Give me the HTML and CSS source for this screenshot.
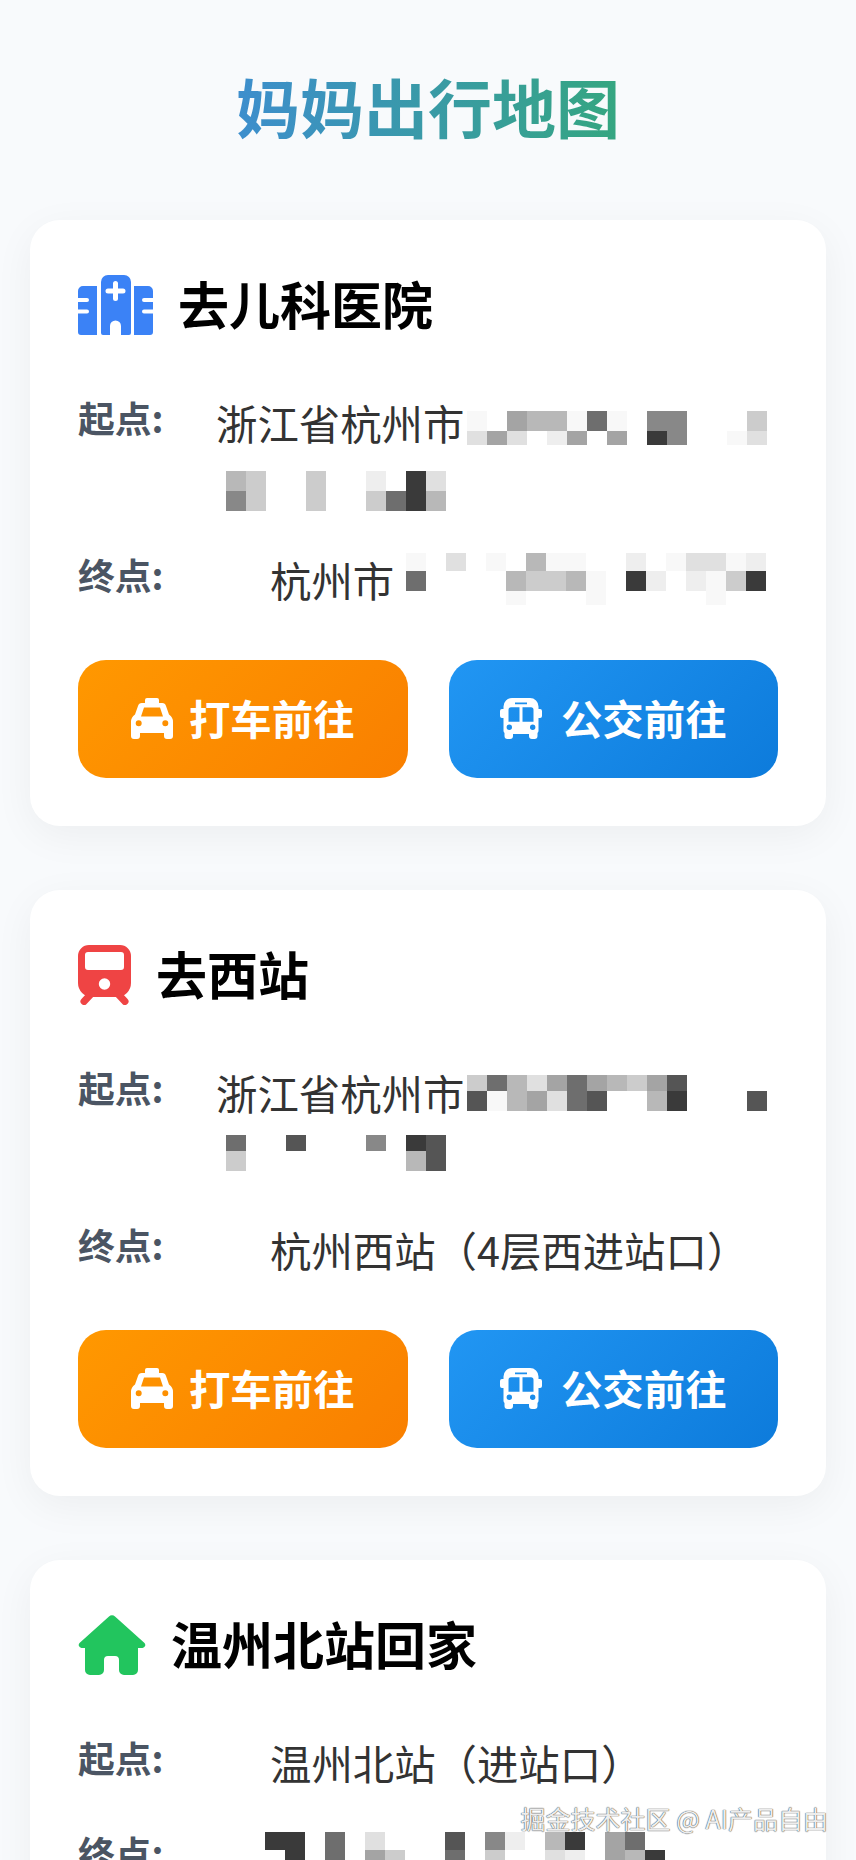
FILE: index.html
```html
<!DOCTYPE html>
<html lang="zh-CN">
<head>
    <meta charset="UTF-8">
    <meta name="viewport" content="width=device-width, initial-scale=1.0">
    <title>妈妈出行地图</title>
    <link rel="stylesheet" href="styles.css">
</head>
<body>
    <svg xmlns="http://www.w3.org/2000/svg" class="defs">
        <symbol id="icon-hospital" viewBox="0 0 75 60">
            <path fill-rule="evenodd" d="M30 0H46a7 7 0 0 1 7 7V58a2 2 0 0 1-2 2H43V51a5 5 0 0 0-11 0V60H25a2 2 0 0 1-2-2V7a7 7 0 0 1 7-7ZM35 8.500V13.500H30a2.500 2.500 0 0 0 0 5H35V23.500a2.500 2.500 0 0 0 5 0V18.500H45a2.500 2.500 0 0 0 0-5H40V8.500a2.500 2.500 0 0 0-5 0Z"/>
            <path d="M5 11H19V60H3a3 3 0 0 1-3-3V38.500H9a2 2 0 0 0 0-4H0V27H9a2 2 0 0 0 0-4H0V16a5 5 0 0 1 5-5Z"/>
            <path d="M56 11H70a5 5 0 0 1 5 5V23H66a2 2 0 0 0 0 4H75V34.500H66a2 2 0 0 0 0 4H75V57a3 3 0 0 1-3 3H56Z"/>
        </symbol>
        <symbol id="icon-train" viewBox="0 0 53 60">
            <path fill-rule="evenodd" d="M11 0H42A11 11 0 0 1 53 11V38A14 14 0 0 1 39 52H14A14 14 0 0 1 0 38V11A11 11 0 0 1 11 0ZM10 7A3 3 0 0 0 7 10V22A3 3 0 0 0 10 25H43A3 3 0 0 0 46 22V10A3 3 0 0 0 43 7ZM26.500 33.300A5.700 5.700 0 1 0 26.500 44.700A5.700 5.700 0 1 0 26.500 33.300Z"/>
            <path d="M13 49L6 56.500" stroke-width="7" stroke-linecap="round"/>
            <path d="M40 49L47 56.500" stroke-width="7" stroke-linecap="round"/>
        </symbol>
        <symbol id="icon-home" viewBox="0 0 68 60">
            <path d="M31 1.500a4 4 0 0 1 6 0L66.500 28a3 3 0 0 1-2 5H60V55a5 5 0 0 1-5 5H46a5 5 0 0 1-5-5V45a4 4 0 0 0-4-4H30a4 4 0 0 0-4 4V55a5 5 0 0 1-5 5H12a5 5 0 0 1-5-5V33H3.500a3 3 0 0 1-2-5Z"/>
        </symbol>
        <symbol id="icon-taxi" viewBox="0 0 42 41">
            <path fill-rule="evenodd" d="M16 0H26a2 2 0 0 1 2 2V5H31a4 4 0 0 1 4 3L38 16.500Q42 19 42 24V38a3 3 0 0 1-3 3H36a3 3 0 0 1-3-3V35H9V38a3 3 0 0 1-3 3H3a3 3 0 0 1-3-3V24Q0 19 4 16.500L7 8a4 4 0 0 1 4-3H14V2a2 2 0 0 1 2-2ZM13 9.500L10 18.500H32L29 9.500ZM7.700 22.300a3 3 0 1 0 0 6a3 3 0 1 0 0-6ZM34.300 22.300a3 3 0 1 0 0 6a3 3 0 1 0 0-6Z"/>
        </symbol>
        <symbol id="icon-bus" viewBox="0 0 42 41">
            <path fill-rule="evenodd" d="M12 0H30a8.500 8.500 0 0 1 8.500 8.500V11H40a2 2 0 0 1 2 2V18a2 2 0 0 1-2 2H38.500V33a3 3 0 0 1-1 2V38a3 3 0 0 1-3 3H32a3 3 0 0 1-3-3V36H13V38a3 3 0 0 1-3 3H7.500a3 3 0 0 1-3-3V35a3 3 0 0 1-1-2V20H2a2 2 0 0 1-2-2V13a2 2 0 0 1 2-2H3.500V8.500A8.500 8.500 0 0 1 12 0ZM15 4.500V6.300H27V4.500ZM11 9.300a2.500 2.500 0 0 0-2.500 2.500V23.700H19.500V9.300ZM22.500 9.300V23.700H33.500V11.800a2.500 2.500 0 0 0-2.500-2.500ZM9.300 26.600a2.700 2.700 0 1 0 0 5.400a2.700 2.700 0 1 0 0-5.400ZM32.700 26.600a2.700 2.700 0 1 0 0 5.400a2.700 2.700 0 1 0 0-5.400Z"/>
        </symbol>
    </svg>

    <h1 class="page-title"><span>妈妈出行地图</span></h1>

    <div class="card">
        <div class="card-head">
            <svg class="head-icon hospital"><use href="#icon-hospital"/></svg>
            <h2>去儿科医院</h2>
        </div>
        <div class="row">
            <div class="label">起点:</div>
            <div class="value">
                <div class="line">
                    <span>浙江省杭州市</span>
                    <div class="mosaic m-a">
                        <div class="r20"><i class="s1"></i><i></i><i class="s6"></i><i class="s5"></i><i class="s5"></i><i class="s1"></i><i class="s8"></i><i class="s1"></i><i></i><i class="s7"></i><i class="s7"></i><i></i><i></i><i></i><i class="s4"></i></div>
                        <div class="r14"><i class="s3"></i><i class="s6"></i><i class="s3"></i><i></i><i class="s2"></i><i class="s6"></i><i></i><i class="s6"></i><i></i><i class="s10"></i><i class="s7"></i><i></i><i></i><i class="s1"></i><i class="s3"></i></div>
                    </div>
                </div>
                <div class="line">
                    <div class="mosaic m-b">
                        <div class="r20"><i class="s5"></i><i class="s4"></i><i></i><i></i><i class="s4"></i><i></i><i></i><i class="s2"></i><i></i><i class="s10"></i><i class="s3"></i></div>
                        <div class="r20"><i class="s7"></i><i class="s4"></i><i></i><i></i><i class="s4"></i><i></i><i></i><i class="s4"></i><i class="s8"></i><i class="s10"></i><i class="s5"></i></div>
                    </div>
                </div>
            </div>
        </div>
        <div class="row">
            <div class="label">终点:</div>
            <div class="value inset">
                <div class="line">
                    <span>杭州市</span>
                    <div class="mosaic m-c">
                        <div class="r18"><i class="s1"></i><i></i><i class="s3"></i><i></i><i class="s1"></i><i></i><i class="s5"></i><i class="s1"></i><i class="s1"></i><i></i><i></i><i class="s2"></i><i></i><i class="s1"></i><i class="s3"></i><i class="s3"></i><i class="s1"></i><i class="s2"></i></div>
                        <div class="r20"><i class="s8"></i><i></i><i></i><i></i><i></i><i class="s5"></i><i class="s4"></i><i class="s4"></i><i class="s5"></i><i class="s1"></i><i></i><i class="s10"></i><i class="s2"></i><i></i><i class="s2"></i><i class="s1"></i><i class="s4"></i><i class="s10"></i></div>
                        <div class="r14"><i></i><i></i><i></i><i></i><i></i><i class="s1"></i><i></i><i></i><i></i><i class="s1"></i><i></i><i></i><i></i><i></i><i></i><i class="s1"></i><i></i><i></i></div>
                    </div>
                </div>
            </div>
        </div>
        <div class="actions">
            <a class="btn btn-taxi"><svg class="btn-icon"><use href="#icon-taxi"/></svg><span class="btn-text">打车前往</span></a>
            <a class="btn btn-bus"><svg class="btn-icon"><use href="#icon-bus"/></svg><span class="btn-text">公交前往</span></a>
        </div>
    </div>

    <div class="card">
        <div class="card-head">
            <svg class="head-icon train"><use href="#icon-train"/></svg>
            <h2>去西站</h2>
        </div>
        <div class="row">
            <div class="label">起点:</div>
            <div class="value">
                <div class="line">
                    <span>浙江省杭州市</span>
                    <div class="mosaic m-d">
                        <div class="r16"><i class="s4"></i><i class="s8"></i><i class="s5"></i><i class="s3"></i><i class="s6"></i><i class="s8"></i><i class="s6"></i><i class="s5"></i><i class="s4"></i><i class="s6"></i><i class="s9"></i><i></i><i></i><i></i><i></i></div>
                        <div class="r20"><i class="s9"></i><i class="s1"></i><i class="s5"></i><i class="s6"></i><i class="s3"></i><i class="s8"></i><i class="s9"></i><i></i><i></i><i class="s5"></i><i class="s10"></i><i></i><i></i><i></i><i class="s9"></i></div>
                    </div>
                </div>
                <div class="line">
                    <div class="mosaic m-e">
                        <div class="r16"><i class="s8"></i><i></i><i></i><i class="s9"></i><i></i><i></i><i></i><i class="s7"></i><i></i><i class="s10"></i><i class="s9"></i></div>
                        <div class="r20"><i class="s4"></i><i></i><i></i><i></i><i></i><i></i><i></i><i></i><i></i><i class="s5"></i><i class="s9"></i></div>
                    </div>
                </div>
            </div>
        </div>
        <div class="row">
            <div class="label">终点:</div>
            <div class="value inset">
                <div class="line"><span>杭州西站（4层西进站口）</span></div>
            </div>
        </div>
        <div class="actions">
            <a class="btn btn-taxi"><svg class="btn-icon"><use href="#icon-taxi"/></svg><span class="btn-text">打车前往</span></a>
            <a class="btn btn-bus"><svg class="btn-icon"><use href="#icon-bus"/></svg><span class="btn-text">公交前往</span></a>
        </div>
    </div>

    <div class="card">
        <div class="card-head">
            <svg class="head-icon home"><use href="#icon-home"/></svg>
            <h2>温州北站回家</h2>
        </div>
        <div class="row">
            <div class="label">起点:</div>
            <div class="value inset">
                <div class="line"><span>温州北站（进站口）</span></div>
            </div>
        </div>
        <div class="row">
            <div class="label">终点:</div>
            <div class="value inset">
                <div class="line">
                    <div class="mosaic m-f">
                        <div class="r18"><i class="s10"></i><i class="s10"></i><i></i><i class="s8"></i><i></i><i class="s3"></i><i></i><i></i><i></i><i class="s9"></i><i></i><i class="s7"></i><i class="s2"></i><i></i><i class="s5"></i><i class="s10"></i><i></i><i class="s6"></i><i class="s8"></i></div>
                        <div class="r20"><i></i><i class="s10"></i><i></i><i class="s8"></i><i></i><i class="s6"></i><i class="s4"></i><i></i><i></i><i class="s8"></i><i></i><i class="s4"></i><i></i><i></i><i class="s3"></i><i class="s2"></i><i></i><i class="s6"></i><i class="s5"></i><i class="s10"></i></div>
                    </div>
                </div>
            </div>
        </div>
    </div>

    <div class="watermark">掘金技术社区 @ AI产品自由</div>
</body>
</html>
```

FILE: styles.css
```css
html, body {
    height: 1860px;
    overflow: hidden;
}
body {
    position: relative;
    margin: 0;
    padding: 60px 30px 0;
    box-sizing: border-box;
    background: #f8fafc;
    font-family: "Noto Sans CJK SC", "Noto Sans", sans-serif;
}
.defs {
    display: none;
}
.page-title {
    margin: 0 0 70px;
    font-size: 64px;
    line-height: 90px;
    font-weight: 700;
    text-align: center;
}
.page-title span {
    display: inline-block;
    background: linear-gradient(90deg, #3d8ecd, #35a680);
    -webkit-background-clip: text;
    background-clip: text;
    color: transparent;
}
.card {
    background: #fff;
    border-radius: 30px;
    box-shadow: 0 10px 40px rgba(0, 0, 0, 0.05);
    margin-bottom: 64px;
    padding: 48px;
}
.card-head {
    display: flex;
    align-items: center;
    gap: 25px;
    height: 74px;
    margin-bottom: 51px;
}
.card-head h2 {
    margin: 0 0 4px;
    color: #000;
    font-size: 51px;
    font-weight: 700;
}
.head-icon {
    height: 60px;
    flex: none;
}
.hospital {
    width: 75px;
    fill: #3b82f6;
}
.train {
    width: 53px;
    fill: #ef4444;
    stroke: #ef4444;
    stroke-width: 0;
}
.home {
    width: 68px;
    fill: #22c55e;
}
.row {
    display: flex;
    align-items: flex-start;
    margin-bottom: 33px;
}
.label {
    flex: none;
    width: 138px;
    color: #4b5563;
    font-size: 36.8px;
    font-weight: 700;
    line-height: 48px;
}
.value {
    flex: 1;
    color: #333;
    font-size: 41.4px;
}
.inset {
    padding-left: 54px;
}
.line {
    display: flex;
    height: 62px;
    line-height: 58px;
}
.mosaic {
    flex: none;
    align-self: flex-start;
}
.mosaic > div {
    display: flex;
}
.mosaic i {
    flex: none;
    width: 20px;
}
.m-a { margin: 18px 0 0 3px; }
.m-b { margin: 16px 0 0 10px; }
.m-c { margin: 3px 0 0 12px; }
.m-d { margin: 12px 0 0 3px; }
.m-e { margin: 10px 0 0 10px; }
.m-f { margin: 4px 0 0 -5px; }
.r14 { height: 14px; }
.r16 { height: 16px; }
.r18 { height: 18px; }
.r20 { height: 20px; }
.s1 { background: #f8f8f8; }
.s2 { background: #eee; }
.s3 { background: #e0e0e0; }
.s4 { background: #ccc; }
.s5 { background: #b8b8b8; }
.s6 { background: #a4a4a4; }
.s7 { background: #888; }
.s8 { background: #6e6e6e; }
.s9 { background: #555; }
.s10 { background: #3a3a3a; }
.actions {
    display: flex;
    gap: 41px;
    margin-top: 48px;
}
.btn {
    flex: 1;
    display: flex;
    align-items: center;
    justify-content: center;
    gap: 16px;
    height: 118px;
    border-radius: 28px;
    color: #fff;
    font-size: 41.4px;
    font-weight: 700;
}
.btn-text {
    margin-bottom: 4px;
}
.btn-taxi {
    background: linear-gradient(135deg, #ff9800, #f97f00);
}
.btn-bus {
    gap: 19px;
    background: linear-gradient(135deg, #2196f3, #0d7bdb);
}
.btn-icon {
    width: 42px;
    height: 41px;
    margin-bottom: 2px;
    fill: #fff;
}
.watermark {
    position: absolute;
    right: 28px;
    top: 1800px;
    color: rgba(255, 255, 255, 0.92);
    font-size: 25px;
    line-height: 36px;
    text-shadow: 0 0 1px #444, 0 0 1px #444;
}
```
